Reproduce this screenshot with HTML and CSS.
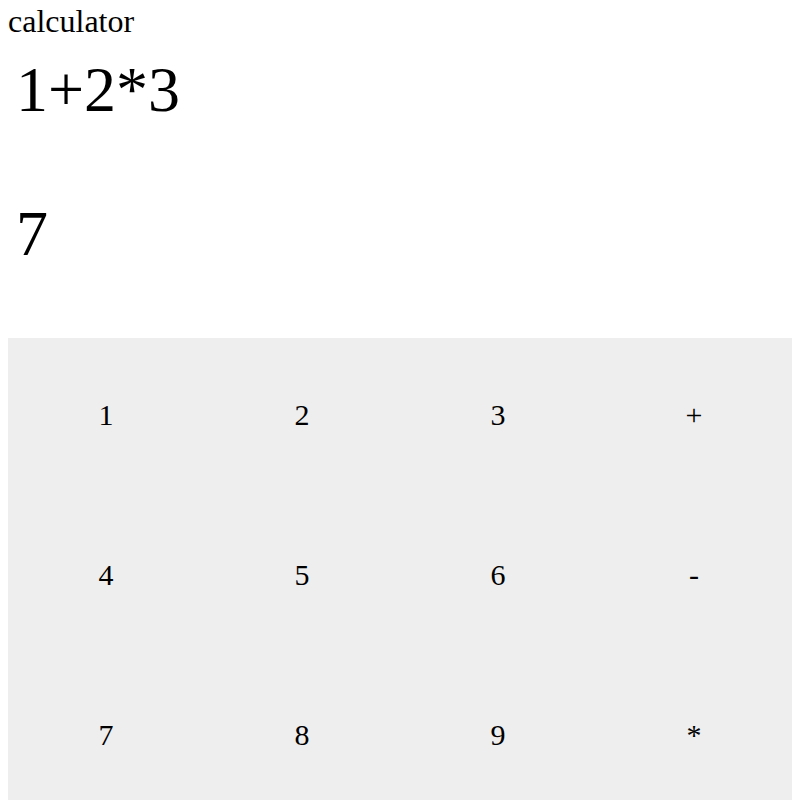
FILE: index.html
```html
<!DOCTYPE html>
<html>
<head>
<meta charset="utf-8">
<title>calculator</title>
<link rel="stylesheet" href="styles.css">
</head>
<body>
<div class="app">
  <div class="title">calculator</div>
  <div class="display">
    <div class="line expr">1+2*3</div>
    <div class="line result">7</div>
  </div>
  <div class="keypad">
    <button class="key">1</button>
    <button class="key">2</button>
    <button class="key">3</button>
    <button class="key">+</button>
    <button class="key">4</button>
    <button class="key">5</button>
    <button class="key">6</button>
    <button class="key">-</button>
    <button class="key">7</button>
    <button class="key">8</button>
    <button class="key">9</button>
    <button class="key">*</button>
  </div>
</div>
</body>
</html>
```

FILE: styles.css
```css
body {
  margin: 8px;
  font-family: "Liberation Serif", "Times New Roman", serif;
  color: #000;
  background: #fff;
}

.title {
  font-size: 32px;
  line-height: 27px;
}

.display {
  display: flex;
  flex-direction: column;
  padding-top: 10px;
  padding-bottom: 5px;
}

.line {
  box-sizing: border-box;
  height: 144px;
  padding: 8px 8px;
  font-size: 64px;
  line-height: 73px;
}

.keypad {
  display: grid;
  grid-template-columns: repeat(4, 1fr);
  grid-auto-rows: 160px;
  background: #eeeeee;
}

.key {
  background: transparent;
  border: none;
  padding: 0 0 6px;
  margin: 0;
  font-family: "Liberation Serif", "Times New Roman", serif;
  font-size: 30px;
  color: #000;
}
```
